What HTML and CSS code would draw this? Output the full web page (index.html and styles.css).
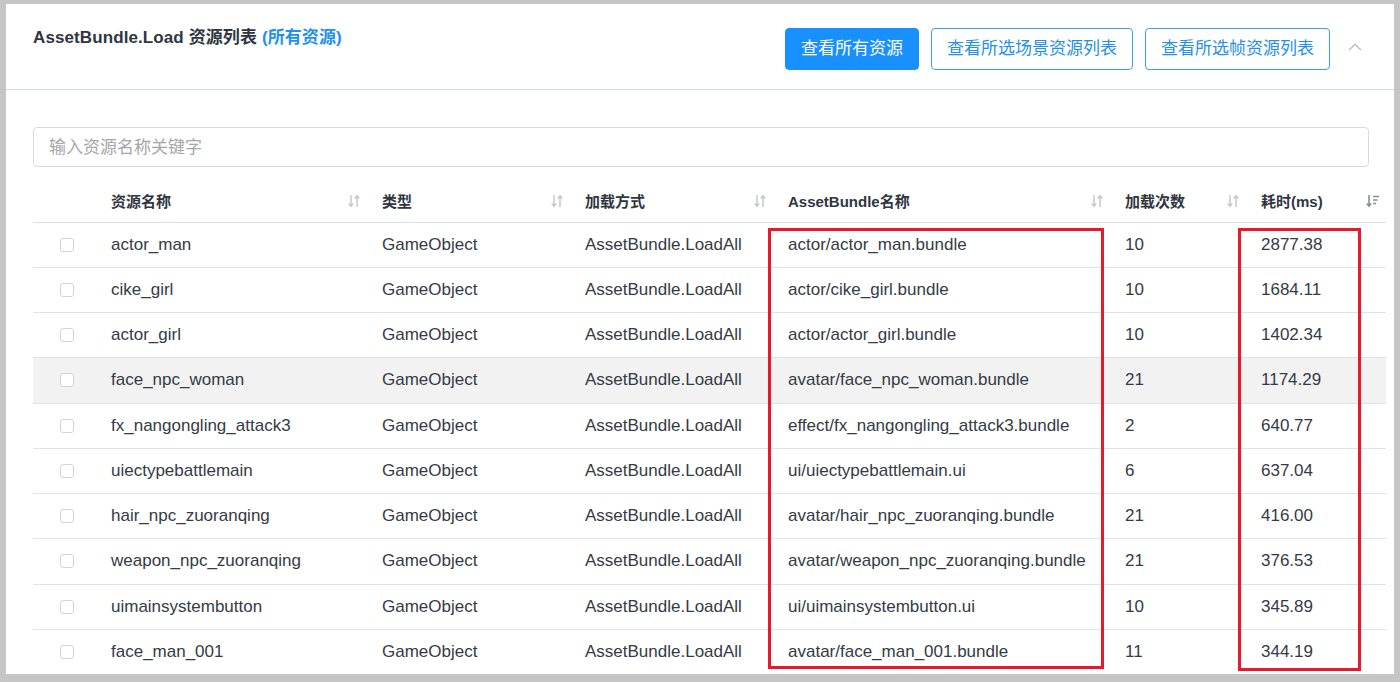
FILE: index.html
```html
<!DOCTYPE html>
<html lang="zh">
<head>
<meta charset="utf-8">
<title>AssetBundle.Load 资源列表</title>
<link rel="stylesheet" href="styles.css">
</head>
<body>
<div class="panel">
  <div class="header">
    <div class="title">AssetBundle.Load 资源列表 <span class="accent">(所有资源)</span></div>
    <div class="actions">
      <button class="btn btn-primary">查看所有资源</button>
      <button class="btn">查看所选场景资源列表</button>
      <button class="btn">查看所选帧资源列表</button>
      <svg class="chev" width="14" height="8" viewBox="0 0 14 8"><path d="M1 7 L7 1.5 L13 7" fill="none" stroke="#b9bcc2" stroke-width="1.3"/></svg>
    </div>
  </div>
  <div class="content">
    <div class="search">输入资源名称关键字</div>
    <table class="grid">
      <colgroup>
        <col class="c0"><col class="c1"><col class="c2"><col class="c3"><col class="c4"><col class="c5"><col class="c6">
      </colgroup>
      <thead>
        <tr>
          <th></th>
          <th><div class="th">资源名称<svg class="sort" width="12" height="14" viewBox="0 0 12 14"><path d="M3 1v11M0.8 9.5L3 12.2 5.2 9.5M9 13V2M6.8 4.5L9 1.8 11.2 4.5" fill="none" stroke="#c6c9ce" stroke-width="1.5"/></svg></div></th>
          <th><div class="th">类型<svg class="sort" width="12" height="14" viewBox="0 0 12 14"><path d="M3 1v11M0.8 9.5L3 12.2 5.2 9.5M9 13V2M6.8 4.5L9 1.8 11.2 4.5" fill="none" stroke="#c6c9ce" stroke-width="1.5"/></svg></div></th>
          <th><div class="th">加载方式<svg class="sort" width="12" height="14" viewBox="0 0 12 14"><path d="M3 1v11M0.8 9.5L3 12.2 5.2 9.5M9 13V2M6.8 4.5L9 1.8 11.2 4.5" fill="none" stroke="#c6c9ce" stroke-width="1.5"/></svg></div></th>
          <th><div class="th">AssetBundle名称<svg class="sort" width="12" height="14" viewBox="0 0 12 14"><path d="M3 1v11M0.8 9.5L3 12.2 5.2 9.5M9 13V2M6.8 4.5L9 1.8 11.2 4.5" fill="none" stroke="#c6c9ce" stroke-width="1.5"/></svg></div></th>
          <th><div class="th">加载次数<svg class="sort" width="12" height="14" viewBox="0 0 12 14"><path d="M3 1v11M0.8 9.5L3 12.2 5.2 9.5M9 13V2M6.8 4.5L9 1.8 11.2 4.5" fill="none" stroke="#c6c9ce" stroke-width="1.5"/></svg></div></th>
          <th><div class="th">耗时(ms)<svg class="sort" width="14" height="14" viewBox="0 0 14 14"><path d="M3 1v11M0.8 9.5L3 12.2 5.2 9.5" fill="none" stroke="#8a8e95" stroke-width="1.6"/><path d="M7 2.5h6M7 6h4.5M7 9.5h3" fill="none" stroke="#8a8e95" stroke-width="1.4"/></svg></div></th>
        </tr>
      </thead>
      <tbody>
        <tr><td><span class="cb"></span></td><td>actor_man</td><td>GameObject</td><td>AssetBundle.LoadAll</td><td>actor/actor_man.bundle</td><td>10</td><td>2877.38</td></tr>
        <tr><td><span class="cb"></span></td><td>cike_girl</td><td>GameObject</td><td>AssetBundle.LoadAll</td><td>actor/cike_girl.bundle</td><td>10</td><td>1684.11</td></tr>
        <tr><td><span class="cb"></span></td><td>actor_girl</td><td>GameObject</td><td>AssetBundle.LoadAll</td><td>actor/actor_girl.bundle</td><td>10</td><td>1402.34</td></tr>
        <tr class="hover"><td><span class="cb"></span></td><td>face_npc_woman</td><td>GameObject</td><td>AssetBundle.LoadAll</td><td>avatar/face_npc_woman.bundle</td><td>21</td><td>1174.29</td></tr>
        <tr><td><span class="cb"></span></td><td>fx_nangongling_attack3</td><td>GameObject</td><td>AssetBundle.LoadAll</td><td>effect/fx_nangongling_attack3.bundle</td><td>2</td><td>640.77</td></tr>
        <tr><td><span class="cb"></span></td><td>uiectypebattlemain</td><td>GameObject</td><td>AssetBundle.LoadAll</td><td>ui/uiectypebattlemain.ui</td><td>6</td><td>637.04</td></tr>
        <tr><td><span class="cb"></span></td><td>hair_npc_zuoranqing</td><td>GameObject</td><td>AssetBundle.LoadAll</td><td>avatar/hair_npc_zuoranqing.bundle</td><td>21</td><td>416.00</td></tr>
        <tr><td><span class="cb"></span></td><td>weapon_npc_zuoranqing</td><td>GameObject</td><td>AssetBundle.LoadAll</td><td>avatar/weapon_npc_zuoranqing.bundle</td><td>21</td><td>376.53</td></tr>
        <tr><td><span class="cb"></span></td><td>uimainsystembutton</td><td>GameObject</td><td>AssetBundle.LoadAll</td><td>ui/uimainsystembutton.ui</td><td>10</td><td>345.89</td></tr>
        <tr><td><span class="cb"></span></td><td>face_man_001</td><td>GameObject</td><td>AssetBundle.LoadAll</td><td>avatar/face_man_001.bundle</td><td>11</td><td>344.19</td></tr>
      </tbody>
    </table>
  </div>
</div>
<div class="mark mark-name"></div>
<div class="mark mark-time"></div>
</body>
</html>
```

FILE: styles.css
```css
* { box-sizing: border-box; }
html, body { margin: 0; padding: 0; }
body {
  width: 1400px;
  height: 682px;
  background: #c6c6c6;
  font-family: "Liberation Sans", "Noto Sans CJK SC", Arial, sans-serif;
  color: #333840;
  padding: 4px 6px 8px 6px;
  overflow: hidden;
  position: relative;
}
.panel {
  background: #fff;
  height: 670px;
  overflow: hidden;
}
.header {
  height: 86px;
  border-bottom: 1px solid #d5dde6;
  display: flex;
  align-items: flex-start;
  padding: 0 32px 0 27px;
}
.title {
  margin-top: 22px;
  font-size: 17px;
  line-height: 24px;
  font-weight: bold;
  letter-spacing: 0.1px;
  color: #2f3640;
}
.accent { color: #1f8ff0; }
.actions {
  margin-left: auto;
  margin-top: 24px;
  display: flex;
  align-items: center;
  gap: 12px;
}
.btn {
  height: 42px;
  padding: 0 15px;
  border: 1px solid #3d9ef0;
  border-radius: 4px;
  background: #fff;
  color: #1f8ff0;
  font-family: "Liberation Sans", "Noto Sans CJK SC", sans-serif;
  font-size: 17px;
  line-height: 40px;
}
.btn-primary {
  background: #1890ff;
  border-color: #1890ff;
  color: #fff;
}
.actions .btn:first-child { margin-left: -1px; }
.chev { margin-left: 6px; margin-top: -4px; }
.content {
  padding: 37px 8px 0 27px;
}
.search {
  height: 40px;
  margin-right: 17px;
  border: 1px solid #d6d9de;
  border-radius: 4px;
  padding-left: 15px;
  font-size: 17px;
  line-height: 40px;
  color: #a3a6ab;
}
.grid {
  margin-top: 13px;
  width: 1353px;
  table-layout: fixed;
  border-collapse: collapse;
  font-size: 17px;
}
.c0 { width: 62px; }
.c1 { width: 271px; }
.c2 { width: 203px; }
.c3 { width: 203px; }
.c4 { width: 337px; }
.c5 { width: 136px; }
.c6 { width: 141px; }
.grid th {
  height: 42px;
  padding: 0;
  border-bottom: 1px solid #dcdfe4;
  text-align: left;
  font-size: 15px;
  font-weight: bold;
  color: #2f3640;
}
.th {
  display: flex;
  align-items: center;
  justify-content: space-between;
  padding: 0 6px 0 16px;
}
.grid td {
  height: 45.25px;
  padding: 0 0 0 16px;
  border-bottom: 1px solid #dfe3e8;
  color: #353b44;
  white-space: nowrap;
}
.grid td:first-child { padding-left: 27px; }
.grid tr.hover td { background: #f2f2f3; }
.cb {
  display: block;
  width: 14px;
  height: 14px;
  border: 1px solid #d0d4da;
  border-radius: 3px;
  background: #fff;
}
.mark {
  position: absolute;
  border: 3px solid #e8192c;
}
.mark-name { left: 768px; top: 228px; width: 336px; height: 441px; }
.mark-time { left: 1238px; top: 228px; width: 123px; height: 443px; }
```
